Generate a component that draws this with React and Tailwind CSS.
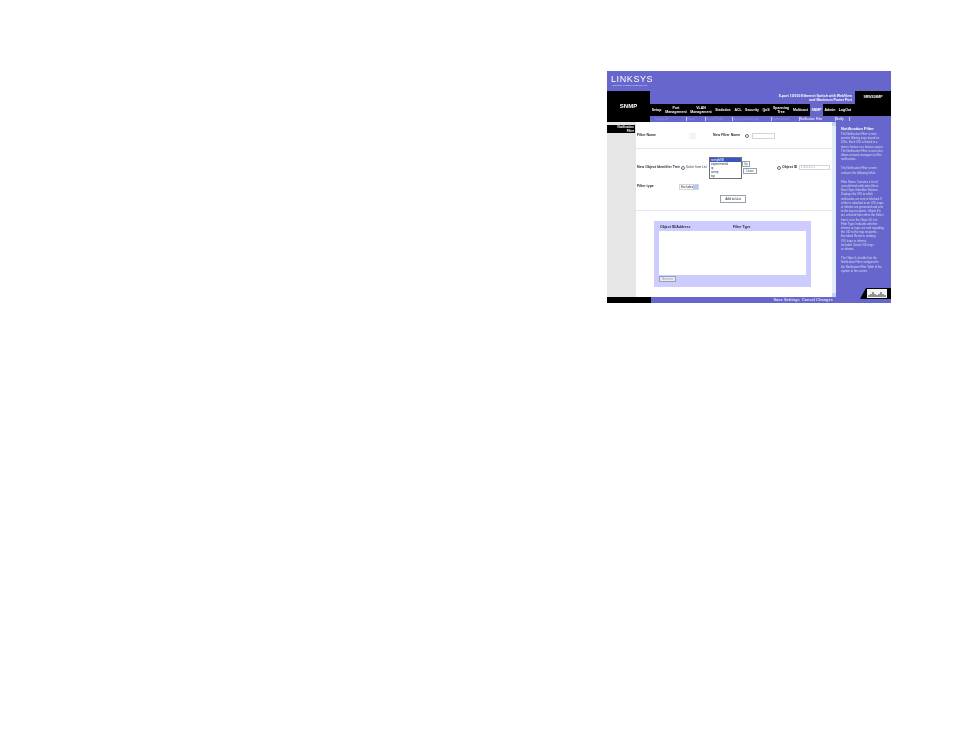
const navItems = [
  { label: 'Setup', w: 'w-[13px]' },
  { label: 'Port Management', w: 'w-[26px]', two: true },
  { label: 'VLAN Management', w: 'w-[24px]', two: true },
  { label: 'Statistics', w: 'w-[20px]' },
  { label: 'ACL', w: 'w-[10px]' },
  { label: 'Security', w: 'w-[18px]' },
  { label: 'QoS', w: 'w-[10px]' },
  { label: 'Spanning Tree', w: 'w-[20px]', two: true },
  { label: 'Multicast', w: 'w-[19px]' },
  { label: 'SNMP', w: 'w-[13px]', active: true },
  { label: 'Admin', w: 'w-[14px]' },
  { label: 'LogOut', w: 'w-[16px]' },
];

const subTabs = [
  { label: 'Engine ID', w: 'w-[32px]' },
  { label: 'Views', w: 'w-[19px]' },
  { label: 'Group Profile', w: 'w-[27px]' },
  { label: 'Group Membership', w: 'w-[39px]' },
  { label: 'Communities', w: 'w-[28px]' },
  { label: 'Notification Filter', w: 'w-[36px]', active: true },
  { label: 'Notify', w: 'w-[14px]', active: true },
];

const helpTop = [
  'The Notification Filter screen',
  'permits filtering traps based on',
  'OIDs. Each OID is linked to a',
  'device feature or a feature aspect.',
  'The Notification Filter screen also',
  'allows network managers to filter',
  'notifications.',
];

const helpMid = [
  'The Notification Filter screen',
  'contains the following fields:',
];

const helpBody = [
  'Filter Name. Contains a list of',
  'user-defined notification filters.',
  'New Object Identifier Subtree.',
  'Displays the OID to which',
  'notification are sent or blocked. If',
  'a filter is attached to an OID, traps',
  'or informs are generated and sent',
  'to the trap recipients. Object IDs',
  'are selected from either the Select',
  'from List or the Object ID List.',
  'Filter Type. Indicates whether',
  'informs or traps are sent regarding',
  'the OID to the trap recipients.',
  'Excluded. Restricts sending',
  'OID traps or informs.',
  'Included. Sends OID traps',
  'or informs.',
];

const helpEnd = [
  'The Object List table lists the',
  'Notification Filter configured in',
  'the Notification Filter Table of the',
  'system or the screen.',
];

function Radio({ className = '' }) {
  return <span className={`block h-[4px] w-[4px] shrink-0 rounded-full border-[0.5px] border-gray-500 bg-white ${className}`} />;
}

function Btn({ children, className = '' }) {
  return (
    <span className={`flex items-center justify-center border border-gray-400 bg-white text-[3px] text-gray-600 ${className}`}>
      {children}
    </span>
  );
}

function Header() {
  return (
    <>
      <div className="flex h-[20px] items-start bg-[#6666cc] pl-[4px] pt-[3px]">
        <div className="flex flex-col text-white">
          <span className="text-[9px] leading-[10px] tracking-[0.6px]">LINKSYS</span>
          <span className="text-[2.5px] leading-[3px] text-gray-200">A Division of Cisco Systems, Inc.</span>
        </div>
      </div>
      <div className="flex h-[31px]">
        <div className="flex w-[43px] shrink-0 items-center justify-center bg-black text-[6px] font-bold text-white">
          SNMP
        </div>
        <div className="flex min-w-0 flex-1 flex-col">
          <div className="flex h-[13px]">
            <div className="flex flex-1 flex-col justify-center bg-[#6666cc] pr-[3px] text-right text-[3.5px] leading-[4px] font-bold text-white">
              <span>8-port 10/100 Ethernet Switch with WebView</span>
              <span>and Maximum Power Port</span>
            </div>
            <div className="flex w-[36px] items-center justify-center bg-black text-[3.5px] font-bold text-white">
              SRW208MP
            </div>
          </div>
          <div className="flex h-[12px] items-stretch bg-black text-center text-[3.5px] leading-[4px] font-bold text-white">
            {navItems.map((item) => (
              <span
                key={item.label}
                className={`flex shrink-0 items-center justify-center ${item.w} ${item.active ? 'bg-[#6666cc]' : ''}`}
              >
                {item.label}
              </span>
            ))}
          </div>
          <div className="flex h-[6px] items-center bg-[#6666cc] pl-[5px] text-[3px]">
            {subTabs.map((t) => (
              <span
                key={t.label}
                className={`shrink-0 overflow-hidden whitespace-nowrap border-r-[0.5px] border-[#c8c8f0] ${t.w} ${t.active ? 'text-white' : 'text-[#8f8fe0]'}`}
              >
                {t.label}
              </span>
            ))}
          </div>
        </div>
      </div>
    </>
  );
}

function FilterForm() {
  return (
    <>
      <div className="flex h-[26px] items-center pl-[1px] pt-[2px] text-[3.5px] font-bold text-gray-800">
        <span className="w-[52px]">Filter Name</span>
        <span className="h-[6px] w-[7px] bg-gray-100" />
        <span className="ml-[17px] w-[32px]">New Filter Name</span>
        <Radio />
        <span className="ml-[3px] h-[6px] w-[23px] border border-gray-300 bg-white" />
      </div>
      <div className="h-px bg-gray-200" />
      <div className="mt-[7px] flex h-[23px] items-center pl-[1px] text-[3.5px]">
        <span className="w-[44px] font-bold text-gray-800">New Object Identifier Tree</span>
        <Radio />
        <span className="ml-[1px] w-[23px] text-[3px] text-gray-700">Select from List</span>
        <div className="flex h-[22px] w-[33px] flex-col border border-gray-500 text-[3px] leading-[4px] text-gray-800">
          <span className="bg-[#3a55c0] pl-[1px] text-white">snmpMIB</span>
          <span className="pl-[1px]">experimental</span>
          <span className="pl-[1px]">ip</span>
          <span className="pl-[1px]">snmp</span>
          <span className="pl-[1px]">tcp</span>
        </div>
        <div className="flex flex-col gap-[1px]">
          <Btn className="h-[6px] w-[8px]">Up</Btn>
          <Btn className="ml-[1px] h-[6px] w-[14px]">Down</Btn>
        </div>
        <Radio className="ml-[20px]" />
        <span className="ml-[1px] w-[17px] font-bold text-gray-800">Object ID</span>
        <span className="flex h-[5px] w-[31px] items-center border border-gray-300 pl-[1px] text-[3px] text-gray-400">1.3.6.1.2.1</span>
      </div>
      <div className="mt-[4px] flex h-[8px] items-center pl-[1px] text-[3.5px] font-bold text-gray-800">
        <span className="w-[42px]">Filter type</span>
        <span className="flex h-[6px] w-[20px] items-center justify-between border border-gray-300 pl-[1px] text-[3px] font-normal">
          Excluded
          <span className="h-full w-[5px] bg-[#b8c8f0]" />
        </span>
      </div>
      <div className="mt-[4px] flex justify-center pr-[2px]">
        <Btn className="h-[8px] w-[26px] font-bold">Add to List</Btn>
      </div>
      <div className="mt-[7px] h-px bg-gray-200" />
    </>
  );
}

function ObjectTable() {
  return (
    <div className="mt-[10px] ml-[18px] flex h-[66px] w-[157px] flex-col bg-[#ccccff] px-[5px]">
      <div className="flex h-[10px] items-end pb-[1px] pl-[1px] text-[3.5px] font-bold text-gray-800">
        <span className="w-[73px]">Object ID/Address</span>
        <span>Filter Type</span>
      </div>
      <div className="h-[44px] bg-white" />
      <Btn className="mt-[1px] h-[6px] w-[17px] bg-[#e8e8f8]! text-gray-400!">Remove</Btn>
    </div>
  );
}

function HelpPanel() {
  return (
    <div className="relative flex w-[55px] shrink-0 flex-col bg-[#6666cc] pl-[5px] pt-[4px] text-[2.8px] leading-[4.2px] text-[#dcdcf8]">
      <span className="mb-[1px] text-[4px] leading-[5px] font-bold text-white">Notification Filter</span>
      {helpTop.map((l) => <span key={l} className="whitespace-nowrap">{l}</span>)}
      <div className="h-[5px]" />
      {helpMid.map((l) => <span key={l} className="whitespace-nowrap">{l}</span>)}
      <div className="h-[5px]" />
      {helpBody.map((l) => <span key={l} className="whitespace-nowrap">{l}</span>)}
      <div className="h-[5px]" />
      {helpEnd.map((l) => <span key={l} className="whitespace-nowrap">{l}</span>)}
      {/* cisco corner */}
      <svg className="absolute right-0 bottom-[-2px] z-10" width="31" height="11" viewBox="0 0 31 11">
        <path d="M0 11 L6 0 L31 0 L31 11 Z" fill="#000" />
        <rect x="7" y="1" width="20" height="9" fill="#f4f4f4" />
        <path d="M9 9V7M11 9V6M13 9V4M15 9V6M17 9V7M19 9V6M21 9V4M23 9V6M25 9V7" stroke="#333" strokeWidth="1" />
      </svg>
    </div>
  );
}

export default function App() {
  return (
    <div className="h-[738px] w-[954px] bg-white pt-[71px] pl-[607px] font-['Liberation_Sans',Arial,sans-serif] blur-[0.35px]">
      <div className="flex h-[232px] w-[284px] flex-col">
        <Header />
        <div className="flex min-h-0 flex-1">
          <div className="w-[29px] shrink-0 bg-[#e6e6e6] pt-[3px]">
            <div className="flex h-[8px] w-[28px] flex-col items-end justify-center bg-black pr-[1px] text-right text-[3px] leading-[4px] font-bold text-white">
              <span>Notification</span>
              <span>Filter</span>
            </div>
          </div>
          <div className="min-w-0 flex-1 bg-white">
            <FilterForm />
            <ObjectTable />
          </div>
          <div className="flex w-[4px] shrink-0 flex-col justify-between bg-[#e4ecfa]">
            <span className="h-[4px] bg-[#c4d4f4]" />
            <span className="h-[4px] bg-[#c4d4f4]" />
          </div>
          <HelpPanel />
        </div>
        <div className="flex h-[6px] shrink-0">
          <div className="w-[44px] bg-black" />
          <div className="flex flex-1 items-center justify-end bg-[#6666cc] pr-[58px] text-[4px] font-bold text-[#dcdcf8]">
            Save Settings&nbsp;&nbsp;Cancel Changes
          </div>
        </div>
      </div>
    </div>
  );
}
